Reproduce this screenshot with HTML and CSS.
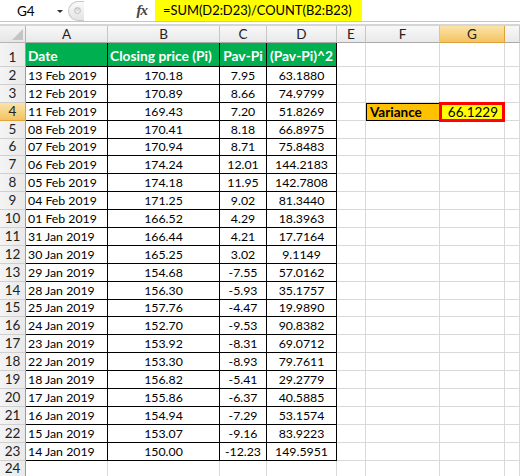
FILE: index.html
```html
<!DOCTYPE html>
<html lang="en">
<head>
    <meta charset="UTF-8">
    <title>Variance - Excel</title>
    <link rel="stylesheet" href="styles.css">
</head>
<body>
    <div class="formula-bar">
        <div class="name-box"><span class="ref">G4</span><span class="drop"></span></div>
        <div class="splitter"><span class="dot"></span></div>
        <div class="fx">fx</div>
        <div class="formula">=SUM(D2:D23)/COUNT(B2:B23)</div>
    </div>
    <div class="bar-gap"></div>

    <div class="sheet">
        <div class="corner"></div>
        <div class="ch">A</div><div class="ch">B</div><div class="ch">C</div><div class="ch">D</div>
        <div class="ch">E</div><div class="ch">F</div><div class="ch sel">G</div><div class="ch"></div>

        <div class="rh">1</div>
        <div class="c t head left">Date</div>
        <div class="c t head left">Closing price (Pi)</div>
        <div class="c t head">Pav-Pi</div>
        <div class="c t head">(Pav-Pi)^2</div>
        <div class="c"></div><div class="c"></div><div class="c"></div><div class="c"></div>

        <div class="rh">2</div>
        <div class="c t left">13 Feb 2019</div><div class="c t">170.18</div><div class="c t">7.95</div><div class="c t">63.1880</div>
        <div class="c"></div><div class="c"></div><div class="c"></div><div class="c"></div>

        <div class="rh">3</div>
        <div class="c t left">12 Feb 2019</div><div class="c t">170.89</div><div class="c t">8.66</div><div class="c t">74.9799</div>
        <div class="c"></div><div class="c"></div><div class="c"></div><div class="c"></div>

        <div class="rh sel">4</div>
        <div class="c t left">11 Feb 2019</div><div class="c t">169.43</div><div class="c t">7.20</div><div class="c t">51.8269</div>
        <div class="c"></div>
        <div class="c label">Variance</div>
        <div class="c result">66.1229</div>
        <div class="c"></div>

        <div class="rh">5</div>
        <div class="c t left">08 Feb 2019</div><div class="c t">170.41</div><div class="c t">8.18</div><div class="c t">66.8975</div>
        <div class="c"></div><div class="c"></div><div class="c"></div><div class="c"></div>

        <div class="rh">6</div>
        <div class="c t left">07 Feb 2019</div><div class="c t">170.94</div><div class="c t">8.71</div><div class="c t">75.8483</div>
        <div class="c"></div><div class="c"></div><div class="c"></div><div class="c"></div>

        <div class="rh">7</div>
        <div class="c t left">06 Feb 2019</div><div class="c t">174.24</div><div class="c t">12.01</div><div class="c t">144.2183</div>
        <div class="c"></div><div class="c"></div><div class="c"></div><div class="c"></div>

        <div class="rh">8</div>
        <div class="c t left">05 Feb 2019</div><div class="c t">174.18</div><div class="c t">11.95</div><div class="c t">142.7808</div>
        <div class="c"></div><div class="c"></div><div class="c"></div><div class="c"></div>

        <div class="rh">9</div>
        <div class="c t left">04 Feb 2019</div><div class="c t">171.25</div><div class="c t">9.02</div><div class="c t">81.3440</div>
        <div class="c"></div><div class="c"></div><div class="c"></div><div class="c"></div>

        <div class="rh">10</div>
        <div class="c t left">01 Feb 2019</div><div class="c t">166.52</div><div class="c t">4.29</div><div class="c t">18.3963</div>
        <div class="c"></div><div class="c"></div><div class="c"></div><div class="c"></div>

        <div class="rh">11</div>
        <div class="c t left">31 Jan 2019</div><div class="c t">166.44</div><div class="c t">4.21</div><div class="c t">17.7164</div>
        <div class="c"></div><div class="c"></div><div class="c"></div><div class="c"></div>

        <div class="rh">12</div>
        <div class="c t left">30 Jan 2019</div><div class="c t">165.25</div><div class="c t">3.02</div><div class="c t">9.1149</div>
        <div class="c"></div><div class="c"></div><div class="c"></div><div class="c"></div>

        <div class="rh">13</div>
        <div class="c t left">29 Jan 2019</div><div class="c t">154.68</div><div class="c t">-7.55</div><div class="c t">57.0162</div>
        <div class="c"></div><div class="c"></div><div class="c"></div><div class="c"></div>

        <div class="rh">14</div>
        <div class="c t left">28 Jan 2019</div><div class="c t">156.30</div><div class="c t">-5.93</div><div class="c t">35.1757</div>
        <div class="c"></div><div class="c"></div><div class="c"></div><div class="c"></div>

        <div class="rh">15</div>
        <div class="c t left">25 Jan 2019</div><div class="c t">157.76</div><div class="c t">-4.47</div><div class="c t">19.9890</div>
        <div class="c"></div><div class="c"></div><div class="c"></div><div class="c"></div>

        <div class="rh">16</div>
        <div class="c t left">24 Jan 2019</div><div class="c t">152.70</div><div class="c t">-9.53</div><div class="c t">90.8382</div>
        <div class="c"></div><div class="c"></div><div class="c"></div><div class="c"></div>

        <div class="rh">17</div>
        <div class="c t left">23 Jan 2019</div><div class="c t">153.92</div><div class="c t">-8.31</div><div class="c t">69.0712</div>
        <div class="c"></div><div class="c"></div><div class="c"></div><div class="c"></div>

        <div class="rh">18</div>
        <div class="c t left">22 Jan 2019</div><div class="c t">153.30</div><div class="c t">-8.93</div><div class="c t">79.7611</div>
        <div class="c"></div><div class="c"></div><div class="c"></div><div class="c"></div>

        <div class="rh">19</div>
        <div class="c t left">18 Jan 2019</div><div class="c t">156.82</div><div class="c t">-5.41</div><div class="c t">29.2779</div>
        <div class="c"></div><div class="c"></div><div class="c"></div><div class="c"></div>

        <div class="rh">20</div>
        <div class="c t left">17 Jan 2019</div><div class="c t">155.86</div><div class="c t">-6.37</div><div class="c t">40.5885</div>
        <div class="c"></div><div class="c"></div><div class="c"></div><div class="c"></div>

        <div class="rh">21</div>
        <div class="c t left">16 Jan 2019</div><div class="c t">154.94</div><div class="c t">-7.29</div><div class="c t">53.1574</div>
        <div class="c"></div><div class="c"></div><div class="c"></div><div class="c"></div>

        <div class="rh">22</div>
        <div class="c t left">15 Jan 2019</div><div class="c t">153.07</div><div class="c t">-9.16</div><div class="c t">83.9223</div>
        <div class="c"></div><div class="c"></div><div class="c"></div><div class="c"></div>

        <div class="rh">23</div>
        <div class="c t left">14 Jan 2019</div><div class="c t">150.00</div><div class="c t">-12.23</div><div class="c t">149.5951</div>
        <div class="c"></div><div class="c"></div><div class="c"></div><div class="c"></div>

        <div class="rh">24</div>
        <div class="c"></div><div class="c"></div><div class="c"></div><div class="c"></div>
        <div class="c"></div><div class="c"></div><div class="c"></div><div class="c"></div>
    </div>
</body>
</html>
```

FILE: styles.css
```css
html, body {
    margin: 0;
    padding: 0;
    width: 520px;
    height: 476px;
    overflow: hidden;
    background: white;
    font-family: Lato, "Open Sans", sans-serif;
    color: #000;
}

/* formula bar */
.formula-bar {
    display: flex;
    height: 22px;
    border-bottom: 1px solid #c4c4c4;
    box-sizing: border-box;
    background: white;
}
.name-box {
    width: 67px;
    display: flex;
    align-items: center;
    font-size: 13.5px;
    position: relative;
}
.name-box .ref { padding-left: 17px; }
.drop {
    position: absolute;
    left: 57px;
    top: 10px;
    border-left: 3px solid transparent;
    border-right: 3px solid transparent;
    border-top: 3px solid #333;
}
.splitter {
    width: 15px;
    height: 18px;
    margin-top: 1px;
    margin-left: 1px;
    border: 1px solid #c8c8c8;
    border-right: none;
    border-radius: 10px 0 0 10px;
    background: linear-gradient(#fafafa, #e4e4e4);
    position: relative;
}
.splitter .dot {
    position: absolute;
    left: 5px;
    top: 5px;
    width: 7px;
    height: 7px;
    border-radius: 50%;
    background: linear-gradient(#d0d0d0, #f4f4f4);
    border: 1px solid #c0c0c0;
    box-sizing: border-box;
}
.fx {
    width: 71px;
    text-align: right;
    box-sizing: border-box;
    padding-right: 8px;
    font-family: "Liberation Serif", serif;
    font-style: italic;
    font-weight: bold;
    font-size: 15px;
    line-height: 21px;
    color: #444;
    letter-spacing: -1px;
}
.formula {
    width: 207px;
    background: #ffff00;
    font-size: 12.9px;
    line-height: 21px;
    padding-left: 8px;
    box-sizing: border-box;
    white-space: nowrap;
}
.bar-gap {
    height: 4px;
    border-top: 2px solid white;
    background: #d6d6d6;
    box-sizing: border-box;
}

/* sheet grid */
.sheet {
    display: grid;
    grid-template-columns: 26px 82px 112px 47px 70px 29px 74px 65px 15px;
    grid-template-rows: 17px 24px repeat(23, 17.9px);
    font-size: 12.3px;
}
.sheet > div {
    box-sizing: border-box;
    white-space: nowrap;
    overflow: hidden;
}
.corner {
    background: linear-gradient(#f4f4f4, #e6e6e6);
    border-right: 1px solid #b5b5b5;
    border-bottom: 1px solid #b5b5b5;
    position: relative;
}
.corner::after {
    content: "";
    position: absolute;
    right: 2px;
    bottom: 2px;
    border-left: 11px solid transparent;
    border-bottom: 11px solid #c4c4c4;
}
.ch {
    background: linear-gradient(#f8f8f8, #e9e9e9);
    border-right: 1px solid #c6c6c6;
    border-bottom: 1px solid #a9a9a9;
    text-align: center;
    font-size: 13.5px;
    line-height: 17px;
    color: #222;
}
.rh {
    background: linear-gradient(90deg, #f4f4f4, #e9e9e9);
    border-right: 1px solid #9c9c9c;
    border-bottom: 1px solid #cfcfcf;
    text-align: center;
    font-size: 13.5px;
    line-height: 17px;
    display: flex;
    align-items: flex-end;
    justify-content: center;
    color: #222;
}
.ch.sel, .rh.sel {
    background: linear-gradient(#fbe3a8, #f2c462);
    border-color: #e3a13a;
}
.c {
    border-right: 1px solid #d9d9d9;
    border-bottom: 1px solid #d9d9d9;
    display: flex;
    align-items: flex-end;
    justify-content: center;
    line-height: 16px;
    padding: 0 2px;
}
.c.left { justify-content: flex-start; }
.c.t {
    border-right-color: #000;
    border-bottom-color: #000;
}
.c.head {
    background: #00b050;
    color: white;
    font-weight: bold;
    font-size: 13.8px;
    padding-bottom: 2px;
}
.label {
    background: #ffc000;
    font-weight: bold;
    font-size: 13.5px;
    justify-content: flex-start;
    border: 1px solid #000;
    padding-left: 3px;
}
.sheet > .result {
    background: #ffff00;
    position: relative;
    overflow: visible;
    justify-content: flex-end;
    padding-right: 6px;
    font-size: 13.5px;
}
.result::after {
    content: "";
    position: absolute;
    left: -1px;
    top: -1px;
    right: -1px;
    bottom: -2px;
    border: 3px solid #ff0000;
}
.result::before {
    content: "";
    position: absolute;
    right: 1px;
    top: 8px;
    width: 1px;
    height: 10px;
    background: #000;
}
```
